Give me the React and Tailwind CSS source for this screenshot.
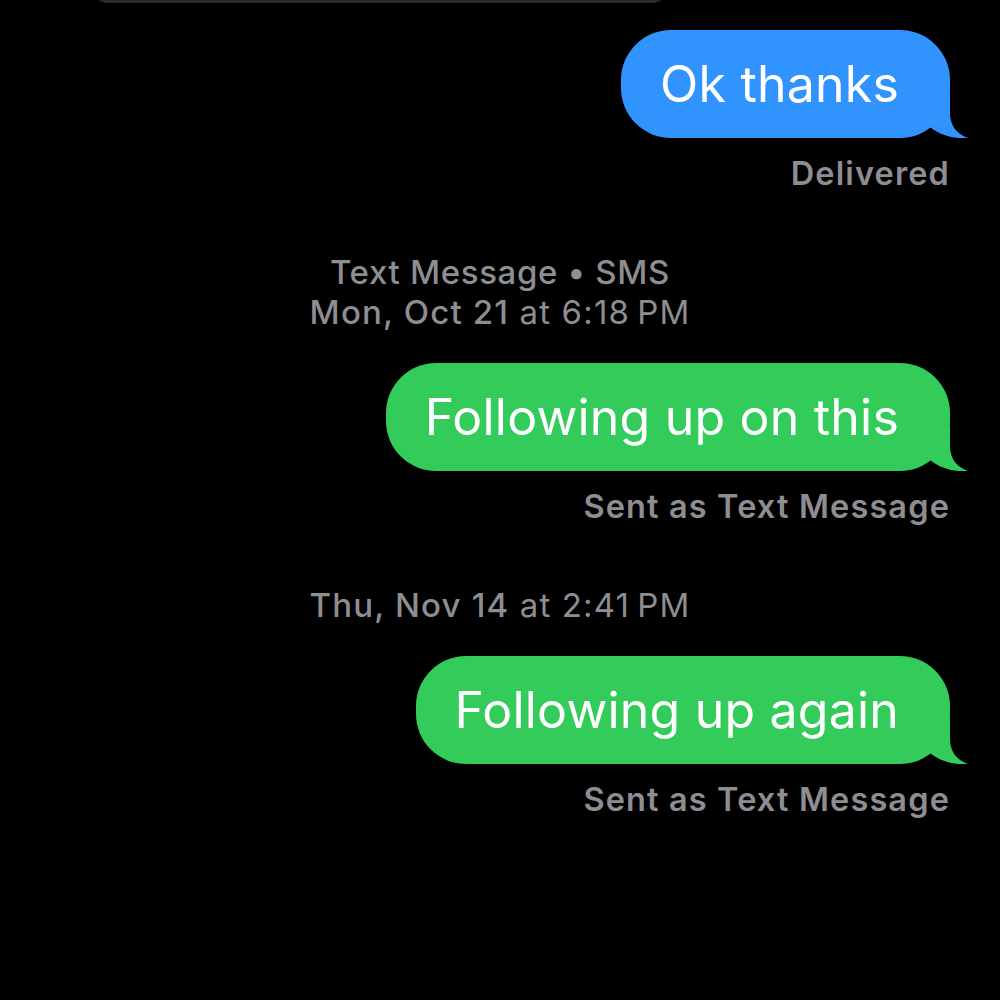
const font = { fontFamily: 'Inter, "Noto Sans", sans-serif' }

function Tail({ color }) {
  return (
    <svg
      className="absolute bottom-0 right-[-18px]"
      width="58"
      height="45"
      viewBox="0 0 58 45"
    >
      <path
        d="M0 0 L40 0 L40 20 C40 33 47 41 58 45 C48 46 32 44 20 34 L0 34 Z"
        fill={color}
      />
    </svg>
  )
}

function Bubble({ text, color }) {
  return (
    <div className="flex justify-end pr-[50px]">
      <div
        className="relative h-[108px] flex items-center pl-[39px] pr-[51px] rounded-[50px]"
        style={{ backgroundColor: color }}
      >
        <span className="text-white text-[50px] leading-none tracking-[0.004em] whitespace-nowrap">
          {text}
        </span>
        <Tail color={color} />
      </div>
    </div>
  )
}

function Footer({ children }) {
  return (
    <div className="mt-[16px] h-[40px] leading-[40px] text-right pr-[50px] text-[32.5px] font-semibold text-[#8d8d92] tracking-[0.035em]">
      {children}
    </div>
  )
}

function Stamp({ children }) {
  return (
    <div className="mt-[58px] text-center text-[33px] leading-[40px] text-[#8d8d92] tracking-[0.035em]">
      {children}
    </div>
  )
}

export default function App() {
  const blue = '#3194fe'
  const green = '#33cc5a'
  return (
    <div className="w-[1000px] h-[1000px] bg-black overflow-hidden relative" style={font}>
      <div className="absolute top-[-20px] left-[89px] w-[582px] h-[23px] rounded-b-[20px] bg-[#2a2a2c]" />
      <div className="flex flex-col pt-[30px]">
        <Bubble text="Ok thanks" color={blue} />
        <Footer>Delivered</Footer>

        <Stamp>
          <div className="font-medium tracking-[0.02em]">Text Message • SMS</div>
          <div>
            <span className="font-medium">Mon, Oct 21</span> at 6:18&#8239;PM
          </div>
        </Stamp>

        <div className="mt-[31px]">
          <Bubble text="Following up on this" color={green} />
        </div>
        <Footer>Sent as Text Message</Footer>

        <Stamp>
          <span className="font-medium">Thu, Nov 14</span> at 2:41&#8239;PM
        </Stamp>

        <div className="mt-[31px]">
          <Bubble text="Following up again" color={green} />
        </div>
        <Footer>Sent as Text Message</Footer>
      </div>
    </div>
  )
}
